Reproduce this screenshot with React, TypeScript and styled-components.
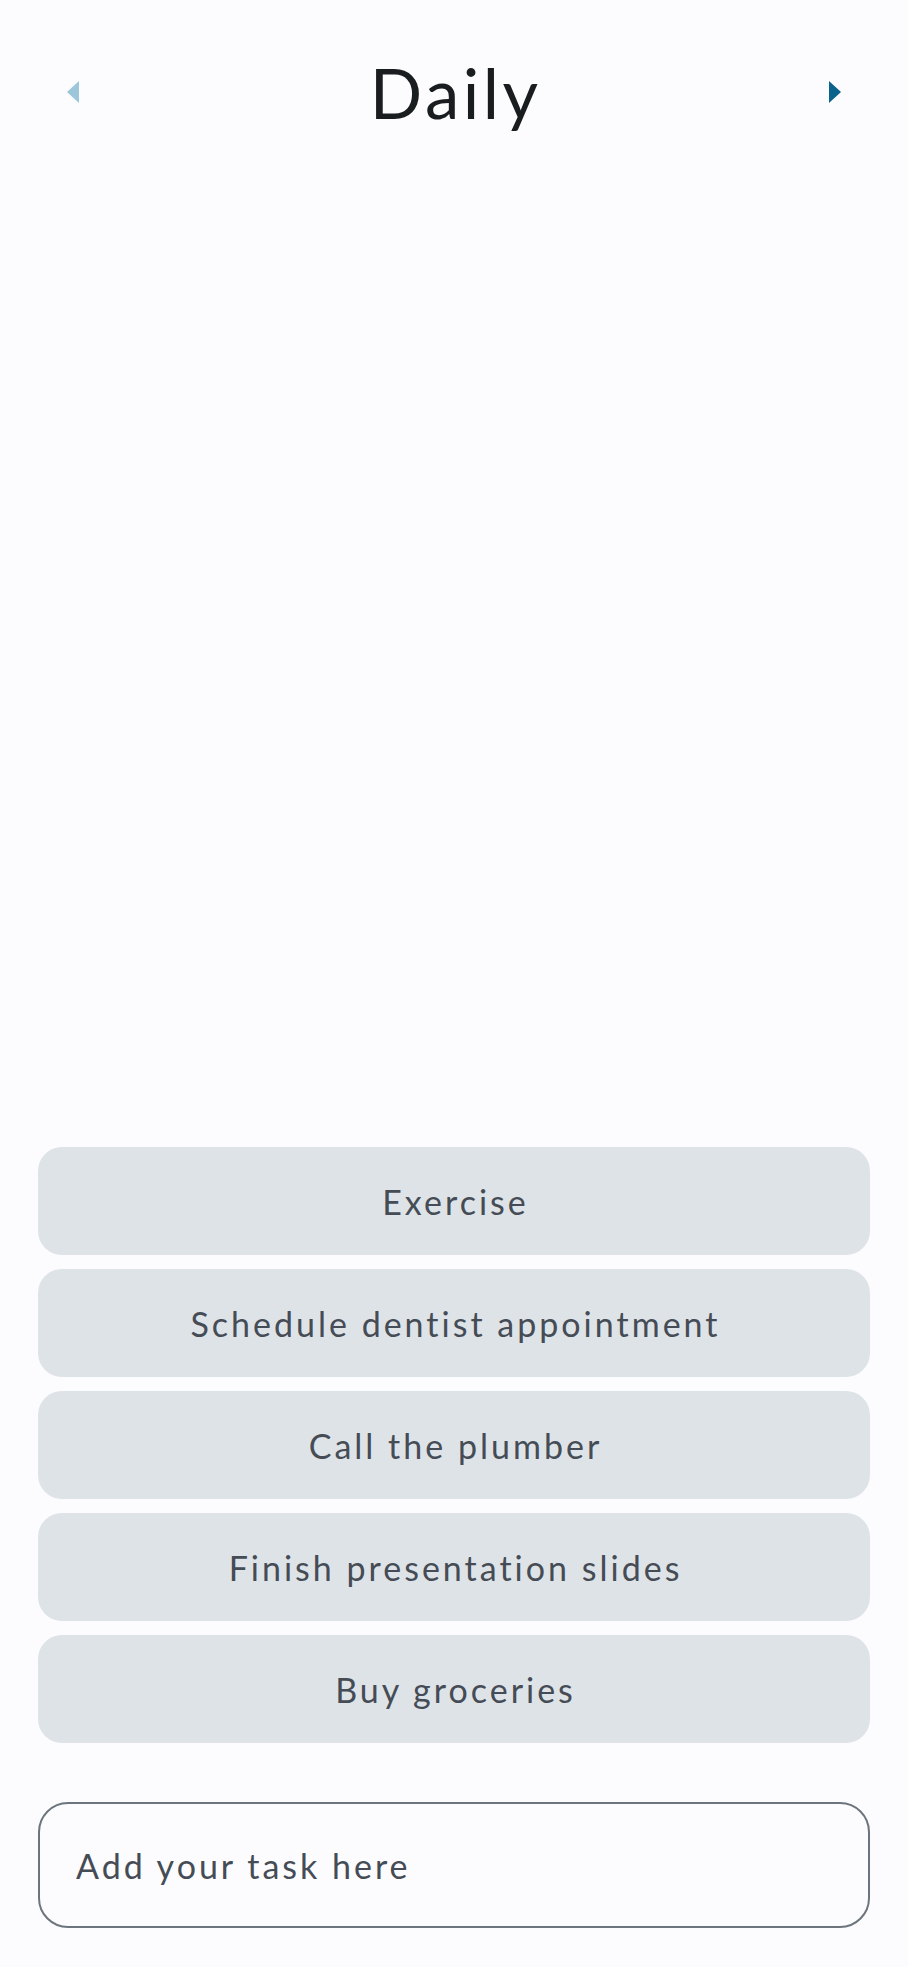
import React from "react";
import styled, { createGlobalStyle } from "styled-components";

const GlobalStyle = createGlobalStyle`
  html, body {
    margin: 0;
    padding: 0;
    background: #fcfcfe;
  }
  * { box-sizing: border-box; }
  body {
    font-family: Lato, "Noto Sans", sans-serif;
  }
`;

const Page = styled.div`
  min-height: 100vh;
  display: flex;
  flex-direction: column;
  background: #fcfcfe;
`;

const Header = styled.header`
  display: flex;
  align-items: center;
  justify-content: space-between;
  padding: 46px 67px 0;
  height: 138px;
`;

const Title = styled.h1`
  margin: 0;
  font-family: Lato, "Noto Sans", sans-serif;
  font-weight: 400;
  font-size: 69px;
  line-height: 1;
  letter-spacing: 3.5px;
  padding-left: 3.5px;
  color: #1a1d20;
`;

const ArrowButton = styled.button<{ $active: boolean }>`
  border: 0;
  background: none;
  padding: 0;
  width: 12px;
  height: 22px;
  display: flex;
  cursor: pointer;
  color: ${(p) => (p.$active ? "#0b628a" : "#9cc6d9")};
`;

const Spacer = styled.div`
  flex: 1;
`;

const TaskList = styled.ul`
  list-style: none;
  margin: 0;
  padding: 0 38px;
  display: flex;
  flex-direction: column;
  gap: 14px;
`;

const TaskItem = styled.li`
  height: 108px;
  border-radius: 24px;
  background: #dee3e8;
  display: flex;
  align-items: center;
  justify-content: center;
  font-size: 34px;
  letter-spacing: 3px;
  padding-left: 3px;
  color: #454c55;
`;

const InputWrap = styled.div`
  padding: 59px 38px 39px;
`;

const TaskInput = styled.input`
  width: 100%;
  height: 126px;
  border: 2px solid #6c757d;
  border-radius: 30px;
  background: #fcfcfe;
  padding: 0 36px;
  font-family: Lato, "Noto Sans", sans-serif;
  font-size: 34px;
  letter-spacing: 3px;
  color: #454c55;
  outline: none;
  &::placeholder {
    color: #454c55;
    opacity: 1;
  }
`;

const LeftArrow = () => (
  <svg width="12" height="22" viewBox="0 0 12 22">
    <polygon points="12,0 0,11 12,22" fill="currentColor" />
  </svg>
);

const RightArrow = () => (
  <svg width="12" height="22" viewBox="0 0 12 22">
    <polygon points="0,0 12,11 0,22" fill="currentColor" />
  </svg>
);

const tasks = [
  "Exercise",
  "Schedule dentist appointment",
  "Call the plumber",
  "Finish presentation slides",
  "Buy groceries",
];

export default function App() {
  return (
    <>
      <GlobalStyle />
      <Page>
        <Header>
          <ArrowButton $active={false} aria-label="previous">
            <LeftArrow />
          </ArrowButton>
          <Title>Daily</Title>
          <ArrowButton $active aria-label="next">
            <RightArrow />
          </ArrowButton>
        </Header>
        <Spacer />
        <TaskList>
          {tasks.map((t) => (
            <TaskItem key={t}>{t}</TaskItem>
          ))}
        </TaskList>
        <InputWrap>
          <TaskInput placeholder="Add your task here" />
        </InputWrap>
      </Page>
    </>
  );
}
